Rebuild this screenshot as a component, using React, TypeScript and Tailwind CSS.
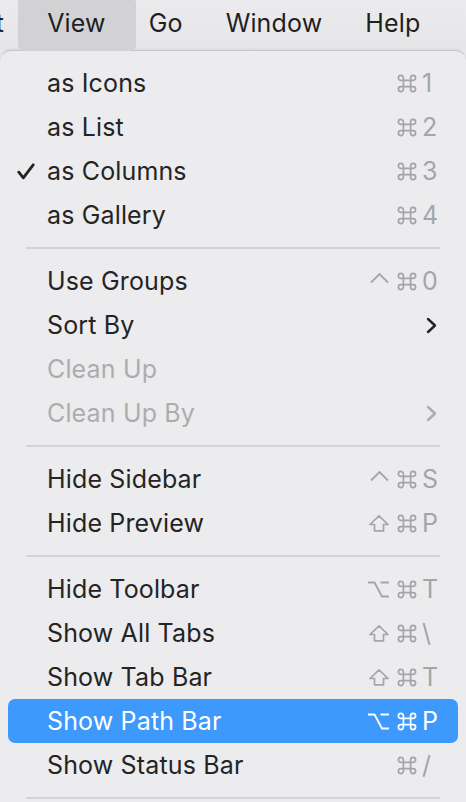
import React from 'react';

type Mod = 'ctrl' | 'cmd' | 'opt' | 'shift';

type Item =
  | { kind: 'sep' }
  | {
      kind: 'item';
      label: string;
      mods?: Mod[];
      keyChar?: string;
      checked?: boolean;
      disabled?: boolean;
      submenu?: boolean;
      active?: boolean;
    };

const items: Item[] = [
  { kind: 'item', label: 'as Icons', mods: ['cmd'], keyChar: '1' },
  { kind: 'item', label: 'as List', mods: ['cmd'], keyChar: '2' },
  { kind: 'item', label: 'as Columns', mods: ['cmd'], keyChar: '3', checked: true },
  { kind: 'item', label: 'as Gallery', mods: ['cmd'], keyChar: '4' },
  { kind: 'sep' },
  { kind: 'item', label: 'Use Groups', mods: ['ctrl', 'cmd'], keyChar: '0' },
  { kind: 'item', label: 'Sort By', submenu: true },
  { kind: 'item', label: 'Clean Up', disabled: true },
  { kind: 'item', label: 'Clean Up By', disabled: true, submenu: true },
  { kind: 'sep' },
  { kind: 'item', label: 'Hide Sidebar', mods: ['ctrl', 'cmd'], keyChar: 'S' },
  { kind: 'item', label: 'Hide Preview', mods: ['shift', 'cmd'], keyChar: 'P' },
  { kind: 'sep' },
  { kind: 'item', label: 'Hide Toolbar', mods: ['opt', 'cmd'], keyChar: 'T' },
  { kind: 'item', label: 'Show All Tabs', mods: ['shift', 'cmd'], keyChar: '\\' },
  { kind: 'item', label: 'Show Tab Bar', mods: ['shift', 'cmd'], keyChar: 'T' },
  { kind: 'item', label: 'Show Path Bar', mods: ['opt', 'cmd'], keyChar: 'P', active: true },
  { kind: 'item', label: 'Show Status Bar', mods: ['cmd'], keyChar: '/' },
  { kind: 'sep' },
];

function ModIcon({ mod }: { mod: Mod }) {
  if (mod === 'cmd') {
    return (
      <svg width="20" height="19" viewBox="0 0 20 19" fill="none" stroke="currentColor" strokeWidth="1.7">
        <path d="M6.4 6.4V3.9A2.5 2.5 0 1 0 3.9 6.4H16.1A2.5 2.5 0 1 0 13.6 3.9V15.1A2.5 2.5 0 1 0 16.1 12.6H3.9A2.5 2.5 0 1 0 6.4 15.1Z" />
      </svg>
    );
  }
  if (mod === 'opt') {
    return (
      <svg width="23" height="19" viewBox="0 0 23 19" fill="none" stroke="currentColor" strokeWidth="1.8">
        <path d="M1 2.5H7.5L15 16.5H22M13.5 2.5H22" />
      </svg>
    );
  }
  if (mod === 'shift') {
    return (
      <svg width="22" height="19" viewBox="0 0 22 19" fill="none" stroke="currentColor" strokeWidth="1.7" strokeLinejoin="round">
        <path d="M11 1.8L20 10.5H15.5V16.8H6.5V10.5H2Z" />
      </svg>
    );
  }
  return (
    <svg width="21" height="19" viewBox="0 0 21 19" fill="none" stroke="currentColor" strokeWidth="1.8">
      <path d="M2 10.5L10.5 2L19 10.5" />
    </svg>
  );
}

function Check() {
  return (
    <svg width="18" height="17" viewBox="0 0 18 17" fill="none" stroke="currentColor" strokeWidth="2.8" strokeLinecap="round" strokeLinejoin="round">
      <path d="M1.8 9.2L6.3 14.8L16.2 1.8" />
    </svg>
  );
}

function Chevron() {
  return (
    <svg width="11" height="17" viewBox="0 0 11 17" fill="none" stroke="currentColor" strokeWidth="2.4" strokeLinecap="round" strokeLinejoin="round">
      <path d="M2 2L9 8.5L2 15" />
    </svg>
  );
}

function MenuRow({ item }: { item: Extract<Item, { kind: 'item' }> }) {
  const labelColor = item.active ? 'text-white' : item.disabled ? 'text-[#acacae]' : 'text-[#242424]';
  const keyColor = item.active ? 'text-white' : 'text-[#a5a5a7]';
  return (
    <div className={`mx-[8px] h-[44px] rounded-[7px] flex items-center pr-[21px] ${item.active ? 'bg-[#3d99fb]' : ''}`}>
      <div className="w-[39px] shrink-0 pl-[9px] flex items-center text-[#242424]">
        {item.checked && <Check />}
      </div>
      <span className={`flex-1 ${labelColor}`}>{item.label}</span>
      {item.submenu && (
        <span className={item.disabled ? 'text-[#acacae]' : 'text-[#242424]'}>
          <Chevron />
        </span>
      )}
      {item.keyChar && (
        <div className={`flex items-center ${keyColor}`}>
          <div className="flex items-center gap-[7px]">
            {item.mods?.map((m) => <ModIcon key={m} mod={m} />)}
          </div>
          <span className="w-[15px] ml-[5px] text-left">{item.keyChar}</span>
        </div>
      )}
    </div>
  );
}

export default function App() {
  return (
    <div className="w-[466px] h-[802px] overflow-hidden bg-[#e9e9eb] text-[25px] tracking-[0.15px] leading-none font-['Inter','Liberation_Sans',sans-serif]">
      <div className="h-[50px] flex items-start text-[#1f1f1f] bg-gradient-to-b from-[#ebebed] to-[#e6e6e8]">
        <div className="flex gap-[43px] -ml-[41px] h-[47px] items-center">
          <span>Edit</span>
          <span className="relative">
            <span className="absolute -left-[29px] -right-[30px] -top-[14px] -bottom-[15px] rounded-[6px] bg-[#d2d2d4]" />
            <span className="relative">View</span>
          </span>
          <span>Go</span>
          <span>Window</span>
          <span>Help</span>
        </div>
      </div>
      <div className="bg-[#ececee] border-t border-[#c9c9cb] rounded-t-[11px] pt-[10px] min-h-[760px] shadow-[0_-1px_2px_rgba(0,0,0,0.08)]">
        {items.map((it, i) =>
          it.kind === 'sep' ? (
            <div key={i} className="h-[22px] flex items-center mx-[26px]">
              <div className="h-[2px] w-full bg-[#d4d4d6]" />
            </div>
          ) : (
            <MenuRow key={i} item={it} />
          )
        )}
      </div>
    </div>
  );
}
